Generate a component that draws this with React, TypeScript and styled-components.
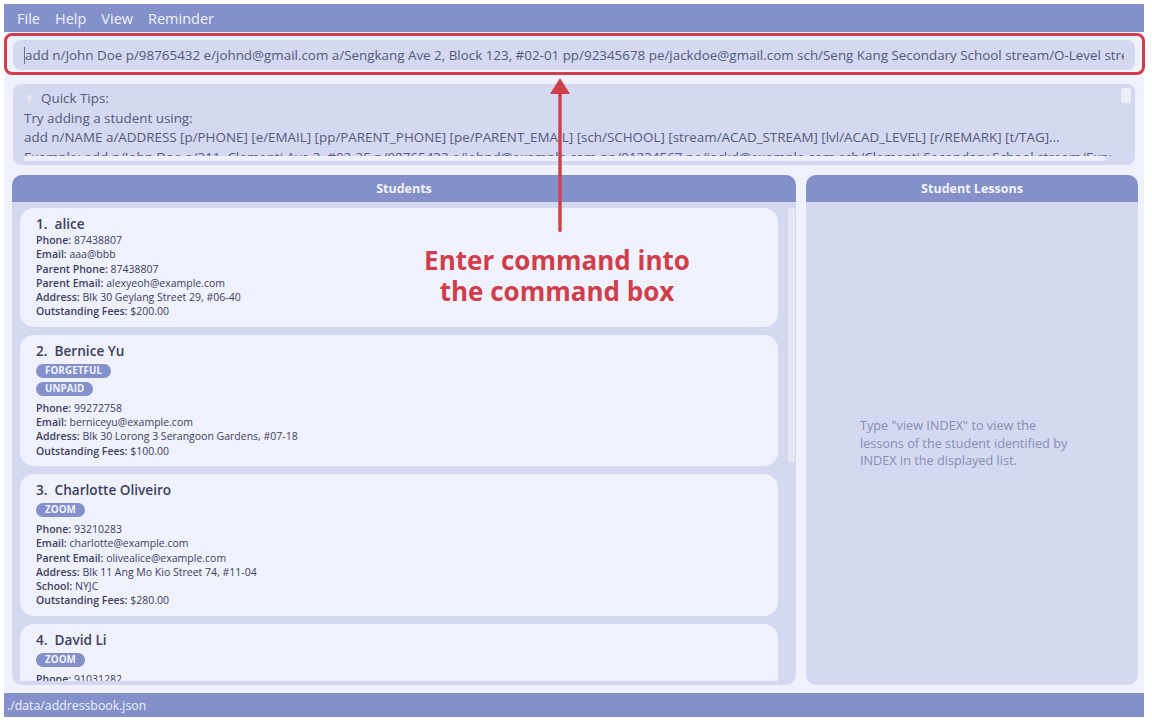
import React from "react";
import styled, { createGlobalStyle } from "styled-components";

const Global = createGlobalStyle`
  html, body { margin: 0; padding: 0; background: #ffffff; }
  body { font-family: "Open Sans", "Noto Sans", sans-serif; }
  * { box-sizing: border-box; }
`;

const Root = styled.div`
  padding: 4px 8px 5px 4px;
`;

const AppFrame = styled.div`
  position: relative;
  width: 1140px;
  height: 713px;
  background: #eff1fc;
  display: flex;
  flex-direction: column;
`;

const MenuBar = styled.div`
  height: 28px;
  background: #8390c9;
  display: flex;
  align-items: center;
  gap: 15px;
  padding-left: 13px;
  color: #eef0fc;
  font-size: 14.5px;
`;

const CommandSection = styled.div`
  position: relative;
  padding: 8px 9px 7px 9px;
`;

const CommandBox = styled.div`
  height: 30px;
  border-radius: 8px;
  background: #d4d8f1;
  display: flex;
  align-items: center;
  padding: 0 11px;
  color: #555a7c;
  font-size: 13.4px;
`;

const CommandText = styled.span`
  flex: 1;
  min-width: 0;
  overflow: hidden;
  white-space: nowrap;
`;

const Caret = styled.span`
  display: inline-block;
  flex-shrink: 0;
  width: 1px;
  height: 17px;
  background: #6a6f92;
`;

const AnnotFrame = styled.div`
  position: absolute;
  left: 0;
  right: -1px;
  top: 1px;
  bottom: 2px;
  border: 3px solid #cf3f4b;
  border-radius: 8px;
  pointer-events: none;
`;

const TipsSection = styled.div`
  padding: 7px 9px 0 9px;
`;

const TipsBox = styled.div`
  height: 81px;
  border-radius: 8px;
  background: #d4d8f1;
  display: flex;
  padding: 4px 4px 4px 11px;
`;

const TipsMain = styled.div`
  flex: 1;
  display: flex;
  flex-direction: column;
  min-width: 0;
`;

const TipsViewport = styled.div`
  height: 68px;
  padding-top: 1px;
  overflow: hidden;
  color: #555a7c;
  font-size: 13.4px;
  line-height: 19.6px;
  white-space: nowrap;
`;

const TipsTitle = styled.div`
  display: flex;
  align-items: center;
  gap: 8px;
  padding-left: 2px;
`;

const HScroll = styled.div`
  height: 5px;
  width: 1081px;
  background: #eef0f9;
  border-radius: 2px;
`;

const VScroll = styled.div`
  width: 10px;
  height: 15px;
  margin-left: 10px;
  background: #eef0f9;
  border-radius: 3px;
`;

const MainRow = styled.div`
  flex: 1;
  margin-top: 10px;
  padding: 0 6px 0 8px;
  display: flex;
  gap: 10px;
  min-height: 0;
`;

const Panel = styled.div<{ $w: number }>`
  width: ${(p) => p.$w}px;
  display: flex;
  flex-direction: column;
  border-radius: 10px;
  overflow: hidden;
  background: #d4d8f1;
`;

const PanelHeader = styled.div`
  height: 27px;
  background: #8390c9;
  color: #f2f3fc;
  font-weight: 700;
  font-size: 12.5px;
  display: flex;
  align-items: center;
  justify-content: center;
`;

const ListArea = styled.div`
  flex: 1;
  display: flex;
  padding: 6px 1px 4px 8px;
  min-height: 0;
`;

const CardList = styled.div`
  flex: 1;
  display: flex;
  flex-direction: column;
  gap: 8px;
  overflow: hidden;
`;

const ListScroll = styled.div`
  width: 7px;
  height: 254px;
  margin-left: 10px;
  background: #e6e8f4;
  border-radius: 3px;
`;

const Card = styled.div`
  flex-shrink: 0;
  background: #eff1fc;
  border-radius: 14px;
  padding: 7px 16px 8px 16px;
  color: #3d405e;
`;

const CardTitle = styled.div`
  font-size: 13.6px;
  font-weight: 600;
  line-height: 18px;
  white-space: pre;
`;

const Tags = styled.div`
  display: flex;
  flex-direction: column;
  align-items: flex-start;
  gap: 4px;
  margin: 4px 0 5px;
`;

const Tag = styled.span`
  height: 14px;
  padding: 0 9px;
  border-radius: 7px;
  background: #8390c9;
  color: #f2f3fc;
  font-size: 9.8px;
  font-weight: 700;
  letter-spacing: 0.1px;
  display: flex;
  align-items: center;
`;

const Line = styled.div`
  font-size: 10.5px;
  line-height: 14.3px;
  white-space: nowrap;
  b { font-weight: 600; }
`;

const LessonsBody = styled.div`
  flex: 1;
  display: flex;
  align-items: center;
  justify-content: center;
  padding-right: 8px;
`;

const Placeholder = styled.div`
  width: 216px;
  color: #898eb3;
  font-size: 12.7px;
  line-height: 17.5px;
`;

const StatusBar = styled.div`
  height: 24px;
  margin-top: 8px;
  background: #8390c9;
  color: #eef0fc;
  font-size: 12.3px;
  display: flex;
  align-items: center;
  padding-left: 3px;
`;

const Arrow = styled.svg`
  position: absolute;
  left: 545px;
  top: 74px;
  pointer-events: none;
`;

const Callout = styled.div`
  position: absolute;
  left: 383px;
  width: 340px;
  top: 241px;
  text-align: center;
  color: #cf3f4b;
  font-weight: 700;
  font-size: 26px;
  line-height: 31px;
`;

type Student = {
  name: string;
  tags?: string[];
  lines: [string, string][];
};

const students: Student[] = [
  {
    name: "alice",
    lines: [
      ["Phone", "87438807"],
      ["Email", "aaa@bbb"],
      ["Parent Phone", "87438807"],
      ["Parent Email", "alexyeoh@example.com"],
      ["Address", "Blk 30 Geylang Street 29, #06-40"],
      ["Outstanding Fees", "$200.00"],
    ],
  },
  {
    name: "Bernice Yu",
    tags: ["FORGETFUL", "UNPAID"],
    lines: [
      ["Phone", "99272758"],
      ["Email", "berniceyu@example.com"],
      ["Address", "Blk 30 Lorong 3 Serangoon Gardens, #07-18"],
      ["Outstanding Fees", "$100.00"],
    ],
  },
  {
    name: "Charlotte Oliveiro",
    tags: ["ZOOM"],
    lines: [
      ["Phone", "93210283"],
      ["Email", "charlotte@example.com"],
      ["Parent Email", "olivealice@example.com"],
      ["Address", "Blk 11 Ang Mo Kio Street 74, #11-04"],
      ["School", "NYJC"],
      ["Outstanding Fees", "$280.00"],
    ],
  },
  {
    name: "David Li",
    tags: ["ZOOM"],
    lines: [
      ["Phone", "91031282"],
      ["Email", "lidavid@example.com"],
      ["Address", "Blk 436 Serangoon Gardens Street 26, #16-43"],
      ["Outstanding Fees", "$0.00"],
    ],
  },
];

const Bulb = () => (
  <svg width="7" height="10" viewBox="0 0 7 10">
    <path d="M3.5 0.8 C1.8 0.8 0.9 2.1 0.9 3.4 C0.9 4.6 1.8 5.3 2.2 6.3 L4.8 6.3 C5.2 5.3 6.1 4.6 6.1 3.4 C6.1 2.1 5.2 0.8 3.5 0.8 Z" fill="#e6e8f4" />
    <rect x="2.3" y="7" width="2.4" height="1.6" rx="0.5" fill="#e6e8f4" />
  </svg>
);

export default function App() {
  return (
    <Root>
      <Global />
      <AppFrame>
        <MenuBar>
          <span>File</span>
          <span>Help</span>
          <span>View</span>
          <span>Reminder</span>
        </MenuBar>
        <CommandSection>
          <CommandBox>
            <Caret />
            <CommandText>
              add n/John Doe p/98765432 e/johnd@gmail.com a/Sengkang Ave 2, Block 123, #02-01 pp/92345678 pe/jackdoe@gmail.com sch/Seng Kang Secondary School stream/O-Level stream lvl/S4 r/Needs help t/friend
            </CommandText>
          </CommandBox>
          <AnnotFrame />
        </CommandSection>
        <TipsSection>
          <TipsBox>
            <TipsMain>
              <TipsViewport>
                <TipsTitle>
                  <Bulb />
                  <span>Quick Tips:</span>
                </TipsTitle>
                <div>Try adding a student using:</div>
                <div>
                  add n/NAME a/ADDRESS [p/PHONE] [e/EMAIL] [pp/PARENT_PHONE] [pe/PARENT_EMAIL] [sch/SCHOOL] [stream/ACAD_STREAM] [lvl/ACAD_LEVEL] [r/REMARK] [t/TAG]...
                </div>
                <div>
                  Example: add n/John Doe a/311, Clementi Ave 2, #02-25 p/98765432 e/johnd@example.com pp/91234567 pe/jackd@example.com sch/Clementi Secondary School stream/Express lvl/S1 r/needs extra help t/owesMoney
                </div>
              </TipsViewport>
              <HScroll />
            </TipsMain>
            <VScroll />
          </TipsBox>
        </TipsSection>
        <MainRow>
          <Panel $w={784}>
            <PanelHeader>Students</PanelHeader>
            <ListArea>
              <CardList>
                {students.map((s, i) => (
                  <Card key={s.name}>
                    <CardTitle>{`${i + 1}.  ${s.name}`}</CardTitle>
                    {s.tags && (
                      <Tags>
                        {s.tags.map((t) => (
                          <Tag key={t}>{t}</Tag>
                        ))}
                      </Tags>
                    )}
                    {s.lines.map(([k, v]) => (
                      <Line key={k}>
                        <b>{k}:</b> {v}
                      </Line>
                    ))}
                  </Card>
                ))}
              </CardList>
              <ListScroll />
            </ListArea>
          </Panel>
          <Panel $w={332}>
            <PanelHeader>Student Lessons</PanelHeader>
            <LessonsBody>
              <Placeholder>
                Type "view INDEX" to view the lessons of the student identified by INDEX in the displayed list.
              </Placeholder>
            </LessonsBody>
          </Panel>
        </MainRow>
        <StatusBar>./data/addressbook.json</StatusBar>
        <Arrow width="22" height="160" viewBox="0 0 22 160">
          <polygon points="11,0 1,16 21,16" fill="#cf3f4b" />
          <rect x="9.3" y="14" width="3.4" height="140" rx="1.5" fill="#cf3f4b" />
        </Arrow>
        <Callout>
          Enter command into
          <br />
          the command box
        </Callout>
      </AppFrame>
    </Root>
  );
}
